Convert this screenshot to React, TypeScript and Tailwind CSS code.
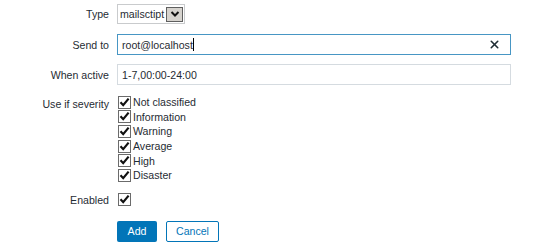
import { X } from "lucide-react";

const severities = ["Not classified", "Information", "Warning", "Average", "High", "Disaster"];

function Check() {
  return (
    <span className="w-[13px] h-[13px] border border-[#6b6b6b] bg-white flex items-center justify-center shrink-0">
      <svg width="11" height="11" viewBox="0 0 11 11">
        <path d="M1.5 5.3 L4.2 8.2 L9.6 1.6" fill="none" stroke="#111" strokeWidth="2.2" />
      </svg>
    </span>
  );
}

export default function App() {
  return (
    <div className="w-[558px] h-[250px] bg-white text-[10.6px] leading-[14px] text-[#1f2c33] font-['Liberation_Sans',Arial,sans-serif] pt-[4px]">
      <div className="grid grid-cols-[109px_1fr] gap-x-[8px] items-center pr-[47px]">
        <label className="text-right">Type</label>
        <div className="flex">
          <div className="h-[20px] border border-[#c9cbcd] flex items-center pl-[2px] pr-[1px] gap-[2px]">
            <span>mailsctipt</span>
            <span className="w-[17px] h-[15px] bg-[#d6d3ce] border border-[#5f5f5f] flex items-center justify-center">
              <svg width="10" height="8" viewBox="0 0 10 8">
                <path d="M1.5 2 L5 5.5 L8.5 2" fill="none" stroke="#111" strokeWidth="2" />
              </svg>
            </span>
          </div>
        </div>

        <label className="text-right mt-[10px]">Send to</label>
        <div className="mt-[10px] h-[21px] border border-[#4796c4] flex items-center pl-[4px] pr-[9px]">
          <span>root@localhost</span>
          <span className="w-px h-[13px] bg-black" />
          <span className="flex-1" />
          <X size={13} strokeWidth={2.8} className="text-[#1f2c33]" />
        </div>

        <label className="text-right mt-[9px]">When active</label>
        <div className="mt-[9px] h-[21px] border border-[#d5dbe0] flex items-center pl-[4px]">
          1-7,00:00-24:00
        </div>

        <label className="text-right self-start mt-[12px]">Use if severity</label>
        <div className="mt-[10px] flex flex-col ml-[1px]">
          {severities.map((s) => (
            <div key={s} className="flex items-center gap-[2px] h-[14.6px]">
              <Check />
              <span>{s}</span>
            </div>
          ))}
        </div>

        <label className="text-right mt-[10px]">Enabled</label>
        <div className="mt-[10px] ml-[1px] h-[14px] flex items-center">
          <Check />
        </div>

        <div />
        <div className="mt-[14px] flex gap-[9px]">
          <button className="h-[21px] w-[40px] bg-[#0275b8] text-white rounded-[2px]">Add</button>
          <button className="h-[21px] w-[53px] border border-[#0275b8] text-[#0275b8] bg-white rounded-[2px]">
            Cancel
          </button>
        </div>
      </div>
    </div>
  );
}
